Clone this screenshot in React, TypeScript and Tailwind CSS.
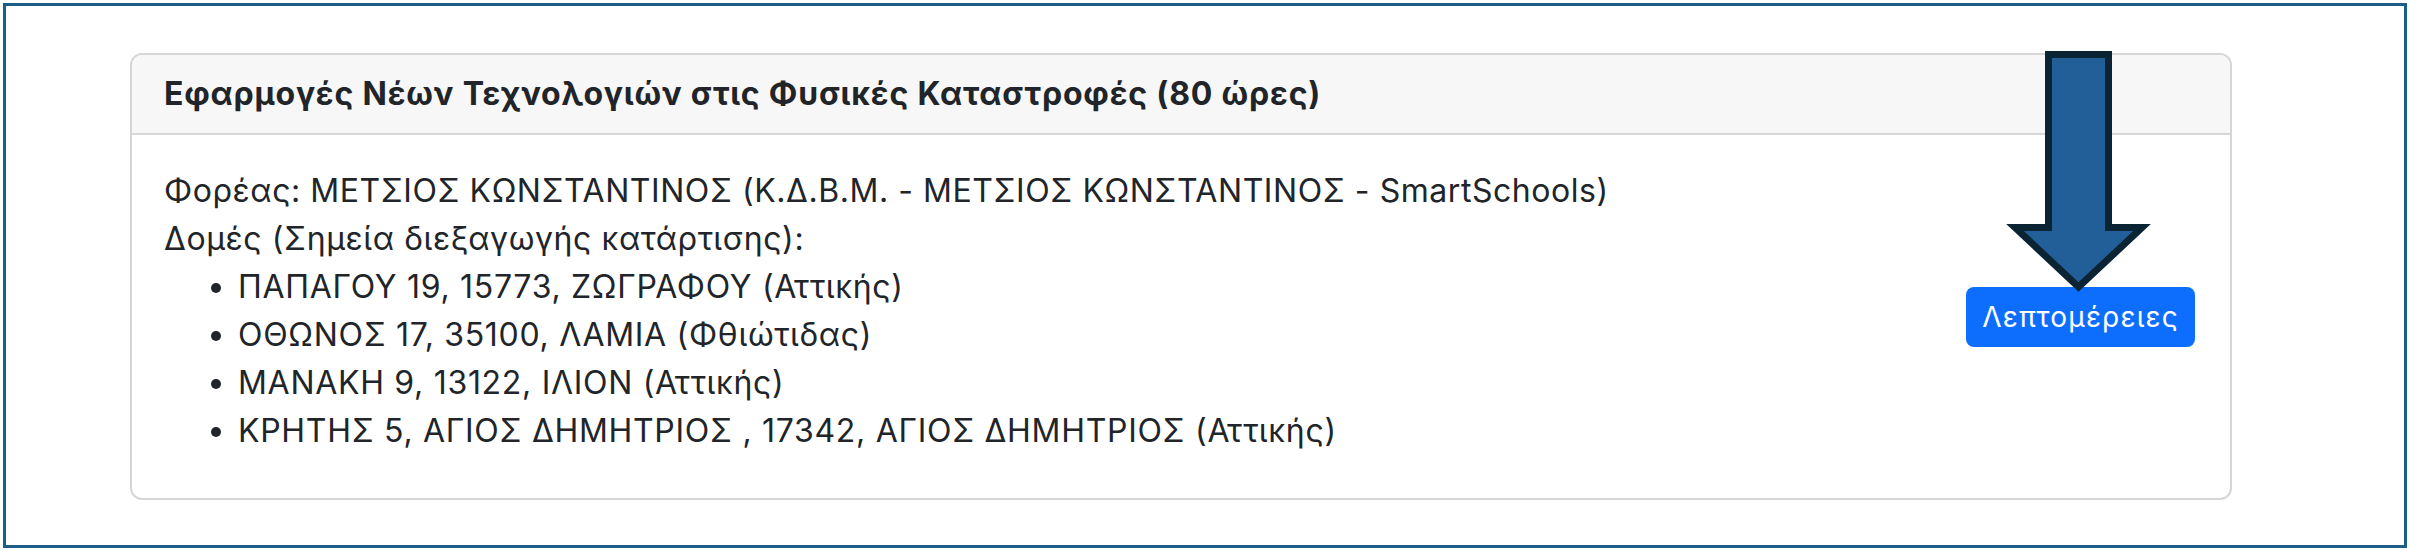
import React from "react";

const items = [
  "ΠΑΠΑΓΟΥ 19, 15773, ΖΩΓΡΑΦΟΥ (Αττικής)",
  "ΟΘΩΝΟΣ 17, 35100, ΛΑΜΙΑ (Φθιώτιδας)",
  "ΜΑΝΑΚΗ 9, 13122, ΙΛΙΟΝ (Αττικής)",
  "ΚΡΗΤΗΣ 5, ΑΓΙΟΣ ΔΗΜΗΤΡΙΟΣ , 17342, ΑΓΙΟΣ ΔΗΜΗΤΡΙΟΣ (Αττικής)",
];

function Arrow() {
  return (
    <svg
      className="absolute left-[2005px] top-[45px]"
      width="150"
      height="255"
      viewBox="0 0 150 255"
    >
      <polygon
        points="43.5,9.5 103.5,9.5 103.5,182.5 137,182.5 73.5,242 10,182.5 43.5,182.5"
        fill="#225f98"
        stroke="#0a2434"
        strokeWidth="7"
        strokeLinejoin="miter"
      />
    </svg>
  );
}

export default function App() {
  return (
    <div
      className="relative w-[2410px] h-[550px] bg-white p-[3px] text-[#212529]"
      style={{ fontFamily: "Inter, 'Noto Sans', sans-serif" }}
    >
      <div className="w-[2404px] h-[545px] border-[3px] border-[#1d5e88] pt-[47px] pl-[124px]">
        <div className="w-[2102px] h-[447px] rounded-[12px] border-2 border-[#d6d6d6] overflow-hidden flex flex-col">
          <div className="bg-[#f7f7f7] border-b-2 border-[#d6d6d6] px-[32px] py-[15px] text-[32px] leading-[48px] font-bold tracking-[0.8px]">
            Εφαρμογές Νέων Τεχνολογιών στις Φυσικές Καταστροφές (80 ώρες)
          </div>
          <div className="flex-1 flex items-center justify-between pl-[32px] pr-[35px] pt-[32px] pb-[32px]">
            <div className="self-start text-[32px] leading-[48px]">
              <div className="tracking-[0.55px]">
                Φορέας: ΜΕΤΣΙΟΣ ΚΩΝΣΤΑΝΤΙΝΟΣ (Κ.Δ.Β.Μ. - ΜΕΤΣΙΟΣ ΚΩΝΣΤΑΝΤΙΝΟΣ - SmartSchools)
              </div>
              <div className="tracking-[0.6px]">Δομές (Σημεία διεξαγωγής κατάρτισης):</div>
              <ul className="list-disc pl-[74px] tracking-[0.7px]">
                {items.map((t) => (
                  <li key={t}>{t}</li>
                ))}
              </ul>
            </div>
            <button className="h-[60px] px-[16px] rounded-[8px] bg-[#0d6efd] text-white text-[28px] leading-[42px] tracking-[1.2px]">
              Λεπτομέρειες
            </button>
          </div>
        </div>
      </div>
      <Arrow />
    </div>
  );
}
